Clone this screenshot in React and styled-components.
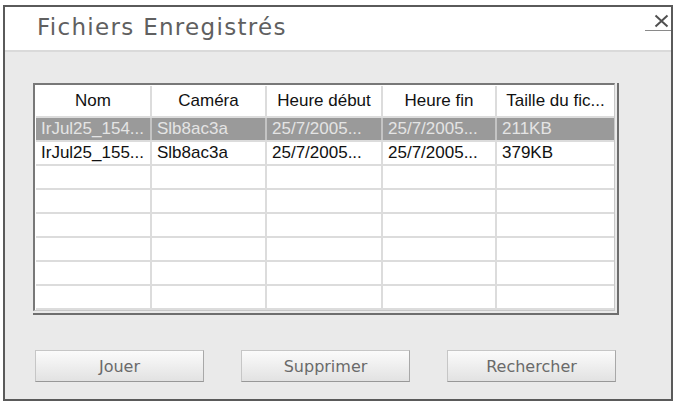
import React from "react";
import styled, { createGlobalStyle } from "styled-components";

const GlobalStyle = createGlobalStyle`
  body {
    margin: 0;
    background: #ffffff;
  }
`;

const Window = styled.div`
  margin: 5px 0 0 3px;
  width: 670px;
  height: 396px;
  box-sizing: border-box;
  border: 2px solid #5a5a5a;
  background: #eaeaea;
  display: flex;
  flex-direction: column;
`;

const TitleBar = styled.div`
  height: 43px;
  flex-shrink: 0;
  background: #ffffff;
  border-bottom: 2px solid #dadada;
  display: flex;
  justify-content: space-between;
  align-items: flex-start;
  padding-left: 32px;
`;

const Title = styled.div`
  margin-top: 9px;
  font-family: "DejaVu Sans", sans-serif;
  font-size: 23px;
  line-height: 23px;
  letter-spacing: 1.3px;
  color: #606060;
`;

const Close = styled.button`
  margin-top: 4px;
  width: 26px;
  height: 20px;
  padding: 0 0 0 6px;
  border: none;
  border-bottom: 1px solid #8a8a8a;
  background: transparent;
  display: flex;
  align-items: center;
  justify-content: center;
`;

const Body = styled.div`
  flex: 1;
  padding: 31px 52px 0 28px;
  display: flex;
  flex-direction: column;
`;

const Frame = styled.div`
  height: 232px;
  box-sizing: border-box;
  border-right: 2px solid #6e6e6e;
  border-bottom: 2px solid #6e6e6e;
  padding: 0 2px 2px 0;
  display: flex;
`;

const TableBox = styled.div`
  flex: 1;
  box-sizing: border-box;
  border-top: 2px solid #787878;
  border-left: 2px solid #787878;
  border-right: 1px solid #c8c8c8;
  border-bottom: 1px solid #c8c8c8;
  padding: 1px 0 0 1px;
  background: #ffffff;
  overflow: hidden;
`;

const Row = styled.div`
  display: grid;
  grid-template-columns: 116px 115px 116px 114px 1fr;
  height: ${(p) => (p.$head ? 32 : 24)}px;
  box-sizing: border-box;
  border-bottom: 2px solid #dcdcdc;
  background: ${(p) => (p.$selected ? "#9a9a9a" : "#ffffff")};
  color: ${(p) => (p.$selected ? "#e4e4e4" : "#111111")};
`;

const Cell = styled.div`
  box-sizing: border-box;
  border-right: 2px solid ${(p) => (p.$selected ? "#c4c4c4" : "#dcdcdc")};
  padding: 0 5px;
  display: flex;
  align-items: center;
  justify-content: ${(p) => (p.$head ? "center" : "flex-start")};
  font-family: "Liberation Sans", Arial, sans-serif;
  font-size: 17px;
  white-space: nowrap;
  overflow: hidden;
  &:last-child {
    border-right: none;
  }
`;

const Buttons = styled.div`
  margin: 35px 0 0 2px;
  display: flex;
  gap: 37px;
`;

const Button = styled.button`
  width: 169px;
  height: 32px;
  box-sizing: border-box;
  border: 1px solid #c6c6c6;
  border-right-color: #a8a8a8;
  border-bottom-color: #989898;
  background: linear-gradient(#fbfbfb, #e2e2e2);
  font-family: "DejaVu Sans", sans-serif;
  font-size: 16px;
  color: #6a6a6a;
  padding: 0;
`;

const headers = ["Nom", "Caméra", "Heure début", "Heure fin", "Taille du fic..."];

const files = [
  ["IrJul25_154...", "Slb8ac3a", "25/7/2005...", "25/7/2005...", "211KB"],
  ["IrJul25_155...", "Slb8ac3a", "25/7/2005...", "25/7/2005...", "379KB"],
];

const emptyRows = 6;

export default function App() {
  return (
    <>
      <GlobalStyle />
      <Window>
        <TitleBar>
          <Title>Fichiers Enregistrés</Title>
          <Close aria-label="Fermer">
            <svg width="15" height="14" viewBox="0 0 15 14">
              <path d="M1.5 1.5 L13.5 12.5 M13.5 1.5 L1.5 12.5" stroke="#505050" strokeWidth="2" fill="none" />
            </svg>
          </Close>
        </TitleBar>
        <Body>
          <Frame>
            <TableBox>
              <Row $head>
                {headers.map((h) => (
                  <Cell $head key={h}>
                    {h}
                  </Cell>
                ))}
              </Row>
              {files.map((f, idx) => (
                <Row key={idx} $selected={idx === 0}>
                  {f.map((v, i) => (
                    <Cell key={i} $selected={idx === 0}>
                      {v}
                    </Cell>
                  ))}
                </Row>
              ))}
              {Array.from({ length: emptyRows }).map((_, idx) => (
                <Row key={"e" + idx}>
                  {headers.map((h) => (
                    <Cell key={h} />
                  ))}
                </Row>
              ))}
            </TableBox>
          </Frame>
          <Buttons>
            <Button>Jouer</Button>
            <Button>Supprimer</Button>
            <Button>Rechercher</Button>
          </Buttons>
        </Body>
      </Window>
    </>
  );
}
